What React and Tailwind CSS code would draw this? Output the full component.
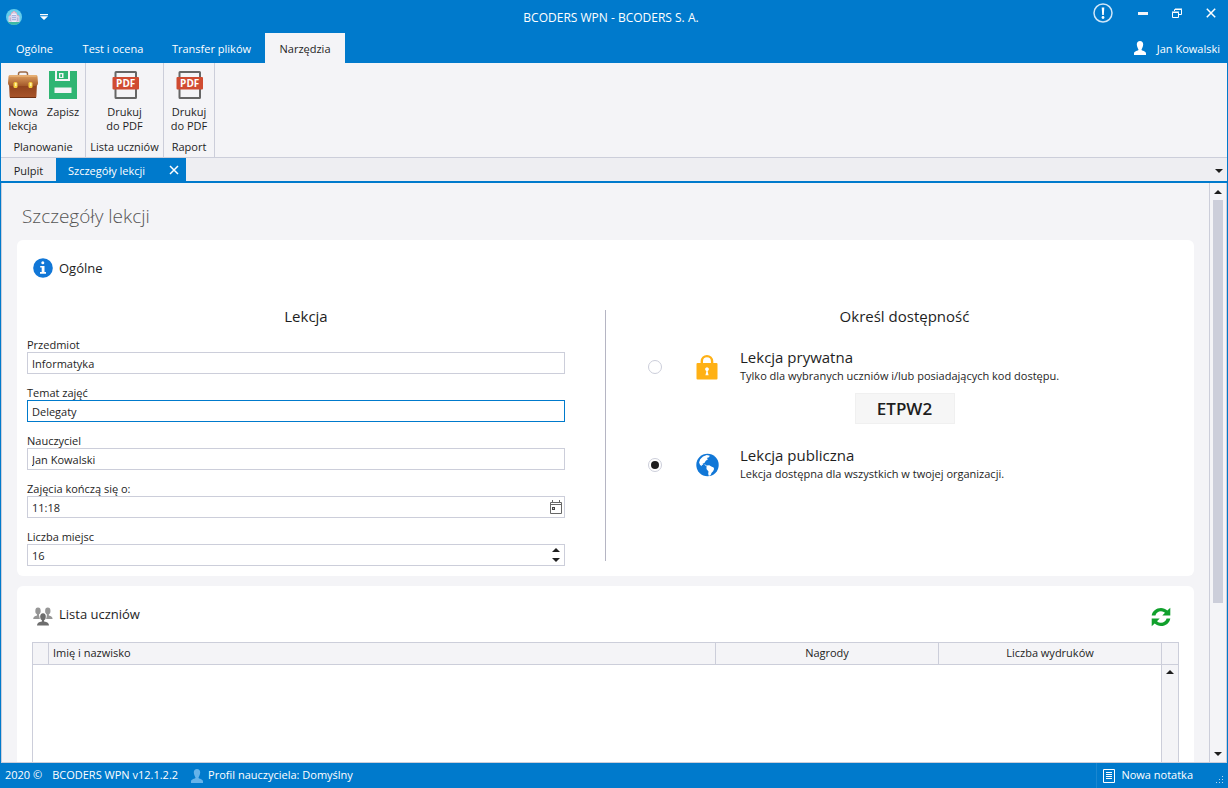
import React, { useState } from "react";

const MENU = [
  { label: "Ogólne", width: "w-[67px]" },
  { label: "Test i ocena", width: "w-[90px]" },
  { label: "Transfer plików", width: "w-[107px]" },
  { label: "Narzędzia", width: "w-20", active: true },
];

function AppIcon() {
  return (
    <svg className="size-4" viewBox="0 0 16 16" aria-hidden="true">
      <circle cx="8" cy="8" r="8" fill="#62cdec" />
      <path d="M1.500 12.500a8 8 0 0 0 13 0z" fill="#3fb8a4" />
      <path d="M2.500 7.500 5 6V4.200L8 2l3 2.200V6l2.500 1.500V13h-11z" fill="#dcd6ec" />
      <path d="M5 4.600 8 2.300l3 2.300M2.800 7.300 5 6M13.200 7.300 11 6" fill="none" stroke="#e3a3b5" strokeWidth="1" />
      <path d="M6 5h4v8H6z" fill="#f1eefa" />
      <path d="M6 6.300h4v.9H6zM6 8.300h4v.9H6zM6 10.300h4v.9H6z" fill="#8b9fd6" />
      <path d="M3.700 8.500h1V12h-1zM11.300 8.500h1V12h-1z" fill="#a8a4d0" />
    </svg>
  );
}

function Briefcase() {
  return (
    <svg className="size-8" viewBox="0 0 32 32" aria-hidden="true">
      <defs>
        <linearGradient id="lid" x1="0" y1="0" x2="0" y2="1">
          <stop offset="0" stopColor="#e0a262" />
          <stop offset="1" stopColor="#a3592a" />
        </linearGradient>
        <linearGradient id="case" x1="0" y1="0" x2="0" y2="1">
          <stop offset="0" stopColor="#8a3f1b" />
          <stop offset="1" stopColor="#a9552a" />
        </linearGradient>
      </defs>
      <path d="M11.5 6.5V5q0-2 2-2h5q2 0 2 2v1.500" fill="none" stroke="#9a6a48" strokeWidth="1.500" />
      <path d="M2 14h28l-.6 13.500q0 1.500-1.500 1.500H4.100q-1.500 0-1.500-1.500z" fill="url(#case)" />
      <path d="M3 6h26q1.500 0 1.500 1.500L31 14q0 3-3 3H4q-3 0-3-3l.5-6.500Q1.500 6 3 6z" fill="url(#lid)" />
      <path d="M2.500 7h27" stroke="#efc08a" strokeWidth="1" />
      <path d="M3 28.500h26" stroke="#6e3013" strokeWidth="1" />
      <rect x="6.500" y="13" width="4" height="6" rx="1.500" fill="#f6cf3f" />
      <rect x="21.500" y="13" width="4" height="6" rx="1.500" fill="#f6cf3f" />
      <path d="M8 14h1.500v3H8zM23 14h1.500v3H23z" fill="#fff2a8" />
    </svg>
  );
}

function Floppy() {
  return (
    <svg className="size-8" viewBox="0 0 32 32" aria-hidden="true">
      <path d="M2 2h28v28H2z" fill="#2fb573" />
      <path d="M8 2h2v8h11V2h2v10H8z" fill="#f4f4f7" />
      <path d="M12 4h4.500v5H12z" fill="#f4f4f7" />
      <path d="M13.300 5.200h1.700v2.800h-1.700z" fill="#2fb573" />
      <path d="M7.500 18.500h17V24h-17z" fill="#f4f4f7" />
    </svg>
  );
}

function PdfIcon() {
  return (
    <svg className="size-8" viewBox="0 0 32 32" aria-hidden="true">
      <rect x="6.500" y="3" width="20.500" height="26" rx="0.500" fill="none" stroke="#666" strokeWidth="2" />
      <rect x="3.500" y="8" width="26.500" height="12.500" rx="1" fill="#d04b31" />
      <text x="16.700" y="17.700" textAnchor="middle" fontFamily="Open Sans, sans-serif" fontSize="10" fontWeight="700" fill="#fff">PDF</text>
    </svg>
  );
}

function PersonIcon({ className }) {
  return (
    <svg className={className} viewBox="0 0 12 14" aria-hidden="true">
      <path d="M6 0c2 0 3.200 1.400 3.200 3.500S7.800 8 7.600 8.200v.8c0 .8 4.400.8 4.400 3.500V14H0v-1.500C0 9.800 4.400 9.800 4.400 9v-.8C4.200 8 2.800 5.600 2.800 3.500S4 0 6 0z" fill="currentColor" />
    </svg>
  );
}

function InfoIcon() {
  return (
    <svg className="size-5" viewBox="0 0 20 20" aria-hidden="true">
      <circle cx="10" cy="10" r="9.800" fill="#1177d7" />
      <circle cx="9.800" cy="4.700" r="1.500" fill="#fff" />
      <path d="M7.200 8h4.300v6h1.500v1.700H7V14h1.700V9.500H7.200z" fill="#fff" />
    </svg>
  );
}

function LockIcon() {
  return (
    <svg className="h-[26px] w-6" viewBox="0 0 24 26" aria-hidden="true">
      <path d="M6.800 10V7.300a5.100 5.100 0 0 1 10.300 0V10" fill="none" stroke="#ffb115" strokeWidth="2.400" />
      <rect x="1.500" y="9" width="21" height="16.500" rx="1" fill="#ffb115" />
      <path d="M12 13.200a2 2 0 0 1 1.100 3.600l-.5.700 1 3.700h-3.200l1-3.700-.5-.7a2 2 0 0 1 1.100-3.600z" fill="#fff" />
    </svg>
  );
}

function GlobeIcon() {
  return (
    <svg className="size-6" viewBox="0 0 24 24" aria-hidden="true">
      <circle cx="12.500" cy="12" r="11.200" fill="#1177d7" />
      <path d="M5.200 6.200 8 3.500l3.800-1.400 3 .7-.8 1.500-2.200.8 1.200 1.200-2.200 1.500-1.400 2.300-1.800.6.700 1.300-1.600-.2.200 1.500-1.800-1.200-1-2.600z" fill="#fff" />
      <path d="m11.500 12.500 2.800-.2 2 1.200 2.300 1 .5 1.400-1 2.400-1.500 1.400-1 2.400-1.700.8-.7-1.800.3-2.700-2-2.300z" fill="#fff" />
      <path d="m9 11.200 2.200.8.500 1-1.300-.4z" fill="#fff" />
    </svg>
  );
}

function PeopleIcon() {
  return (
    <svg className="size-5" viewBox="0 0 20 20" aria-hidden="true">
      <g fill="#969696">
        <ellipse cx="5" cy="4" rx="2.700" ry="3.400" />
        <ellipse cx="14.800" cy="4" rx="2.700" ry="3.400" />
        <path d="M4 6.500h2V8.500l1 .8V12H.2q0-2.600 3.800-3.500zM15.800 6.500h-2v2l-1 .8V12h6.800q0-2.600-3.800-3.500z" />
      </g>
      <path d="M10 5.500c2.200 0 3.600 1.500 3.600 3.800 0 1.800-.7 3.300-1.500 4.200H7.900c-.8-.9-1.500-2.400-1.500-4.200 0-2.300 1.400-3.800 3.600-3.800z" fill="#fff" />
      <g fill="#6d6d6d">
        <ellipse cx="10" cy="9.700" rx="2.800" ry="3.500" />
        <path d="M8.900 12.500h2.200v2.100q4.900.5 4.900 3.900H4q0-3.400 4.900-3.900z" />
      </g>
    </svg>
  );
}

function RefreshIcon() {
  return (
    <svg className="size-5" viewBox="0 0 20 20" aria-hidden="true">
      <g fill="#10a02c">
        <path d="M.7 8.500C1.300 4.200 5.200.9 10 .9c2.400 0 4.700.9 6.300 2.500L19.300.8v7.700h-8l2.700-2.700A5.800 5.800 0 0 0 10 4.200c-2.700 0-5 1.800-5.600 4.300z" />
        <path d="M19.300 11.500c-.6 4.300-4.500 7.600-9.300 7.600-2.400 0-4.700-.9-6.300-2.500L.7 19.200v-7.700h8L6 14.200a5.800 5.800 0 0 0 4 1.600c2.700 0 5-1.800 5.600-4.300z" />
      </g>
    </svg>
  );
}

function CalendarIcon() {
  return (
    <svg className="size-3.5" viewBox="0 0 14 14" aria-hidden="true">
      <path d="M1.500 2.500h11v11h-11zM1.500 4.500h11M3.500 0v3M10.500 0v3" fill="none" stroke="#666" />
      <path d="M3 7h3v3H3z" fill="#444" />
      <path d="M4 8h1v1H4z" fill="#ccc" />
    </svg>
  );
}

function Up() {
  return (
    <svg className="h-1 w-2" viewBox="0 0 8 4" aria-hidden="true">
      <path d="M0 4 4 0l4 4z" fill="#1e1e1e" />
    </svg>
  );
}

function Down() {
  return (
    <svg className="h-1 w-2" viewBox="0 0 8 4" aria-hidden="true">
      <path d="m0 0 4 4 4-4z" fill="#1e1e1e" />
    </svg>
  );
}

function TitleBar() {
  return (
    <div className="grid h-[33px] grid-cols-[1fr_auto_1fr] items-center pr-3 pl-1.5">
      <div className="flex items-center gap-[18px]">
        <AppIcon />
        <button type="button" aria-label="Pasek szybkiego dostępu">
          <svg className="h-1.5 w-2" viewBox="0 0 8 6">
            <path d="M0 0h8v1.200H0zM0 2.200h8L4 6z" fill="#fff" />
          </svg>
        </button>
      </div>
      <h1 className="pt-0.5 text-[12px]">BCODERS WPN - BCODERS S. A.</h1>
      <div className="flex h-[26px] items-center justify-end">
        <button type="button" aria-label="Powiadomienia" className="mr-[25px] mb-2">
          <svg className="size-5" viewBox="0 0 20 20">
            <circle cx="10" cy="10" r="9" fill="none" stroke="#cfe6f8" strokeWidth="1.500" />
            <path d="M8.700 4.500h2.600l-.5 7.500H9.200z" fill="#fff" />
            <circle cx="10" cy="14.500" r="1.400" fill="#fff" />
          </svg>
        </button>
        <button type="button" aria-label="Minimalizuj" className="mr-6 mb-2">
          <svg className="h-2.5 w-2.5" viewBox="0 0 10 10">
            <path d="M0 4h10v3H0z" fill="#f4f4f7" />
          </svg>
        </button>
        <button type="button" aria-label="Przywróć" className="mr-6 mb-2">
          <svg className="size-2.5" viewBox="0 0 10 10">
            <path d="M2.500 3V1.500h7v5H7M3 1h7M.5 4.500h6v5h-6zM0 4h7" fill="none" stroke="#fff" />
          </svg>
        </button>
        <button type="button" aria-label="Zamknij" className="mb-2">
          <svg className="size-2.5" viewBox="0 0 10 10">
            <path d="m.8.800 8.400 8.400M9.200.8.800 9.200" stroke="#fff" strokeWidth="1.500" />
          </svg>
        </button>
      </div>
    </div>
  );
}

function RibbonGroup({ label, width, children }) {
  return (
    <section className={`flex flex-col items-center border-r border-[#ccceda] pt-1.5 ${width}`}>
      <div className="flex">{children}</div>
      <h2 className="mt-auto pb-0.5 leading-4 whitespace-nowrap">{label}</h2>
    </section>
  );
}

function RibbonButton({ icon, lines }) {
  return (
    <button type="button" className="flex w-10 flex-col items-center">
      {icon}
      <span className="mt-1 flex flex-col leading-[14px] whitespace-nowrap">
        {lines.map((line) => (
          <span key={line}>{line}</span>
        ))}
      </span>
    </button>
  );
}

function Field({ id, label, value, active, children }) {
  return (
    <div>
      <label htmlFor={id} className="block pt-0.5 leading-[14px]">{label}</label>
      <div className="relative">
        <input
          id={id}
          type="text"
          defaultValue={value}
          className={
            active
              ? "h-[22px] w-full border border-[#007acc] bg-white px-1 outline-none"
              : "h-[22px] w-full border border-[#ccceda] bg-white px-1 outline-none focus:border-[#007acc]"
          }
        />
        {children}
      </div>
    </div>
  );
}

function Option({ id, checked, onChange, icon, title, text }) {
  return (
    <div className="flex items-center pl-8">
      <input
        id={id}
        type="radio"
        name="access"
        checked={checked}
        onChange={onChange}
        className="grid size-3.5 shrink-0 appearance-none place-content-center rounded-full border border-[#ccceda] bg-white before:size-2 before:rounded-full checked:before:bg-[#1e1e1e]"
      />
      <span className="mr-[21px] ml-[33px] shrink-0">{icon}</span>
      <label htmlFor={id} className="block">
        <span className="block text-[15px] leading-[18px]">{title}</span>
        <span className="block leading-5">{text}</span>
      </label>
    </div>
  );
}

export default function App() {
  const [access, setAccess] = useState("public");
  return (
    <div className="flex h-screen flex-col bg-[#007acc] font-['Open_Sans','Noto_Sans',sans-serif] text-[11px] text-[#1e1e1e]">
      <header className="shrink-0 text-white">
        <TitleBar />
        <div className="flex h-[30px] items-stretch justify-between pr-2 pl-px">
          <nav className="flex">
            {MENU.map((item) => (
              <button
                key={item.label}
                type="button"
                className={`pt-0.5 ${item.width} ${item.active ? "bg-[#f4f4f7] text-[#1e1e1e]" : ""}`}
              >
                {item.label}
              </button>
            ))}
          </nav>
          <button type="button" className="flex items-center gap-[11px] pt-0.5">
            <PersonIcon className="mb-0.5 h-3.5 w-3" />
            Jan Kowalski
          </button>
        </div>
      </header>

      <div className="mx-px flex h-[95px] shrink-0 border-b border-[#ccceda] bg-[#f4f4f7]">
        <RibbonGroup label="Planowanie" width="w-[85px]">
          <RibbonButton icon={<Briefcase />} lines={["Nowa", "lekcja"]} />
          <RibbonButton icon={<Floppy />} lines={["Zapisz"]} />
        </RibbonGroup>
        <RibbonGroup label="Lista uczniów" width="w-[78px]">
          <RibbonButton icon={<PdfIcon />} lines={["Drukuj", "do PDF"]} />
        </RibbonGroup>
        <RibbonGroup label="Raport" width="w-[51px]">
          <RibbonButton icon={<PdfIcon />} lines={["Drukuj", "do PDF"]} />
        </RibbonGroup>
      </div>

      <div className="mx-px flex h-[25px] shrink-0 items-stretch border-b-2 border-[#007acc] bg-[#eeeef2]">
        <button type="button" className="w-[55px] pt-[3px]">Pulpit</button>
        <div className="flex w-[130px] items-center justify-between bg-[#007acc] pt-[3px] pr-[7px] pl-3 text-white">
          <button type="button">Szczegóły lekcji</button>
          <button type="button" aria-label="Zamknij kartę" className="pb-0.5">
            <svg className="size-2.5" viewBox="0 0 10 10">
              <path d="m1 1 8 8M9 1 1 9" stroke="#fff" strokeWidth="1.500" />
            </svg>
          </button>
        </div>
        <button type="button" aria-label="Lista kart" className="ml-auto flex items-center px-1 pt-0.5">
          <Down />
        </button>
      </div>

      <div className="mx-px flex min-h-0 flex-1 border-x border-b border-[#ccceda] bg-[#f4f4f7]">
        <main className="min-w-0 flex-1 overflow-hidden px-[15px]">
          <h2 className="mt-[19px] mb-2.5 pl-[5px] text-[19px] leading-7 font-light text-[#555]">Szczegóły lekcji</h2>

          <section className="mb-2.5 rounded-md bg-white pt-[18px] pb-2.5">
            <h3 className="mb-7 flex items-center gap-1.5 pl-4 text-[13px] leading-5">
              <InfoIcon />
              Ogólne
            </h3>
            <div className="mr-px grid grid-cols-2">
              <div className="pr-5 pl-2.5">
                <h4 className="text-center text-[15px] leading-5">Lekcja</h4>
                <div className="mt-2.5 mr-5 flex flex-col gap-2.5">
                  <Field id="subject" label="Przedmiot" value="Informatyka" />
                  <Field id="topic" label="Temat zajęć" value="Delegaty" active />
                  <Field id="teacher" label="Nauczyciel" value="Jan Kowalski" />
                  <Field id="ends" label="Zajęcia kończą się o:" value="11:18">
                    <button type="button" aria-label="Wybierz godzinę" className="absolute inset-y-0 right-0.5 flex items-center">
                      <CalendarIcon />
                    </button>
                  </Field>
                  <Field id="seats" label="Liczba miejsc" value="16">
                    <div className="absolute inset-y-0 right-[5px] flex flex-col justify-center gap-1.5">
                      <button type="button" aria-label="Zwiększ" className="flex"><Up /></button>
                      <button type="button" aria-label="Zmniejsz" className="flex"><Down /></button>
                    </div>
                  </Field>
                </div>
              </div>
              <div className="flex">
                <div className="mt-1 mb-[5px] w-px bg-[#b5b5c3]" />
                <div className="flex min-w-0 flex-1 flex-col pl-2.5">
                  <h4 className="mb-[22px] text-center text-[15px] leading-5">Określ dostępność</h4>
                  <Option
                    id="private"
                    checked={access === "private"}
                    onChange={() => setAccess("private")}
                    icon={<LockIcon />}
                    title="Lekcja prywatna"
                    text="Tylko dla wybranych uczniów i/lub posiadających kod dostępu."
                  />
                  <output htmlFor="private" className="mt-[7px] mb-[22px] w-[100px] self-center border border-[#f0f0f0] bg-[#f6f6f6] text-center text-[17px] leading-[29px] font-semibold">
                    ETPW2
                  </output>
                  <Option
                    id="public"
                    checked={access === "public"}
                    onChange={() => setAccess("public")}
                    icon={<GlobeIcon />}
                    title="Lekcja publiczna"
                    text="Lekcja dostępna dla wszystkich w twojej organizacji."
                  />
                </div>
              </div>
            </div>
          </section>

          <section className="rounded-md bg-white px-[15px] pt-[18px] pb-4">
            <div className="mb-3.5 flex h-6 items-start justify-between pr-2 pl-px">
              <h3 className="flex items-start gap-1.5 text-[13px] leading-5">
                <span className="pt-[3px]">
                  <PeopleIcon />
                </span>
                Lista uczniów
              </h3>
              <button type="button" aria-label="Odśwież" className="pt-[3px]">
                <RefreshIcon />
              </button>
            </div>
            <table className="w-full table-fixed border-collapse border border-[#ccceda]">
              <thead>
                <tr className="h-[22px] bg-[#f4f4f7] [&>th]:border [&>th]:border-[#ccceda] [&>th]:font-normal">
                  <th className="w-4" aria-label="Zaznaczenie" />
                  <th className="px-1 text-left">Imię i nazwisko</th>
                  <th className="w-[223px]">Nagrody</th>
                  <th className="w-[223px]">Liczba wydruków</th>
                  <th className="w-[17px]" aria-label="Przewijanie" />
                </tr>
              </thead>
              <tbody>
                <tr className="h-60">
                  <td colSpan={4} />
                  <td className="border-l border-[#ccceda] bg-[#f4f4f7] align-top">
                    <button type="button" aria-label="Przewiń listę w górę" className="flex w-full justify-center pt-[5px]">
                      <Up />
                    </button>
                  </td>
                </tr>
              </tbody>
            </table>
          </section>
        </main>

        <div className="flex w-[17px] shrink-0 flex-col items-center border-l border-[#ccceda]">
          <button type="button" aria-label="Przewiń w górę" className="flex h-[17px] items-center"><Up /></button>
          <div className="flex w-2.5 flex-1 flex-col">
            <div className="h-[74%] bg-[#ccceda]" />
          </div>
          <button type="button" aria-label="Przewiń w dół" className="flex h-[17px] items-center"><Down /></button>
        </div>
      </div>

      <footer className="flex h-[25px] shrink-0 items-center pl-[5px] text-white">
        <span>2020 ©</span>
        <span className="ml-2.5">BCODERS WPN v12.1.2.2</span>
        <PersonIcon className="mr-[5px] ml-[13px] h-3.5 w-3 text-[#66b3ea]" />
        <span>Profil nauczyciela: Domyślny</span>
        <button type="button" className="ml-auto flex h-full items-center gap-1.5 border-l border-[#1a87d1] px-1.5">
          <svg className="h-3.5 w-3" viewBox="0 0 12 14" aria-hidden="true">
            <path d="M.5.500h11v13H.5zM3 3.500h6M3 5.500h6M3 7.500h6M3 9.500h6" fill="none" stroke="#fff" />
          </svg>
          Nowa notatka
        </button>
        <svg className="mr-1 mb-1 ml-[17px] size-2 self-end" viewBox="0 0 8 8" aria-hidden="true">
          <path d="M6 0h1v1H6zM3 3h1v1H3zM6 3h1v1H6zM0 6h1v1H0zM3 6h1v1H3zM6 6h1v1H6z" fill="#b5dbf5" />
        </svg>
      </footer>
    </div>
  );
}
